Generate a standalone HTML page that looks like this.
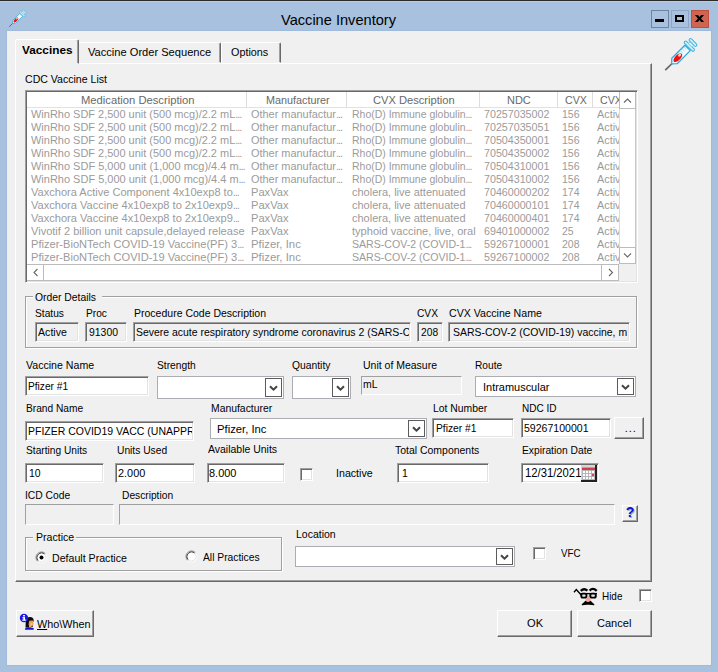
<!DOCTYPE html>
<html><head><meta charset="utf-8"><title>Vaccine Inventory</title>
<style>
html,body{margin:0;padding:0}
body{width:718px;height:672px;overflow:hidden;position:relative;background:#a7c1de;font-family:"Liberation Sans",Arial,sans-serif;font-size:11px;color:#000}
.a{position:absolute}
.t{position:absolute;white-space:nowrap;transform-origin:0 0;display:block}
.tb{position:absolute;box-sizing:border-box;background:#fff;border:1px solid;border-color:#a0a0a0 #fff #fff #a0a0a0;box-shadow:inset 1px 1px 0 #696969,inset -1px -1px 0 #e3e3e3}
.ro{position:absolute;box-sizing:border-box;background:#f0f0f0;border:1px solid;border-color:#a0a0a0 #fff #fff #a0a0a0;box-shadow:inset 1px 1px 0 #696969,inset -1px -1px 0 #e3e3e3}
.fl{position:absolute;box-sizing:border-box;background:#f0f0f0;border:1px solid;border-color:#a0a0a0 #fff #fff #a0a0a0}
.cb{position:absolute;box-sizing:border-box;background:#fff;border:1px solid #abadb3}
.cb i{position:absolute;right:1px;top:1px;bottom:1px;width:17px;background:#fff;border:1px solid #5c5c5c;box-sizing:border-box}
.cb i svg{position:absolute;left:3px;top:50%;margin-top:-3px}
.btn{position:absolute;box-sizing:border-box;background:#f0f0f0;border:1px solid;border-color:#fff #696969 #696969 #fff;box-shadow:inset -1px -1px 0 #a0a0a0,inset 1px 1px 0 #f0f0f0}
.chk{position:absolute;box-sizing:border-box;width:13px;height:13px;background:#fff;border:1px solid;border-color:#a0a0a0 #fff #fff #a0a0a0;box-shadow:inset 1px 1px 0 #696969,inset -1px -1px 0 #e3e3e3}
.grp{position:absolute;box-sizing:border-box;border:1px solid #a0a0a0;box-shadow:inset 1px 1px 0 #fff,1px 1px 0 #fff}
.clip{position:absolute;overflow:hidden}
</style></head><body>
<!-- window frame -->
<div class="a" style="left:0;top:0;width:718px;height:1px;background:#2b2b2b"></div>
<div class="a" style="left:0;top:1px;width:718px;height:1px;background:#b6cce7"></div>
<div class="a" style="left:7px;top:31px;width:704px;height:634px;background:#f0f0f0;box-shadow:0 0 0 1px #9fbadb"></div>

<span class="t" style="left:280.5px;top:11.80px;font-size:15px;line-height:15px;transform:scaleX(0.9735)">Vaccine Inventory</span>
<svg class="a" style="left:0;top:0" width="718" height="80" viewBox="0 0 718 80"><g transform="translate(9.200 26.800) rotate(-45) scale(0.540)">
<line x1="0" y1="0" x2="9.500" y2="0" stroke="#666" stroke-width="1.700"/>
<path d="M9 0 L13 -3.800 L31.500 -3.800 L31.500 3.800 L13 3.800 Z" fill="#ecf9fe" stroke="#2eaadc" stroke-width="1.300" stroke-linejoin="round"/>
<path d="M22 -3 V0 M24.500 -3 V0 M27 -3 V0 M29.500 -3 V0" stroke="#9adcf0" stroke-width="0.800"/>
<ellipse cx="17.700" cy="0" rx="5.600" ry="2.700" fill="#f01212"/>
<ellipse cx="20.800" cy="-0.600" rx="1.700" ry="1.300" fill="#ffd6cc"/>
<rect x="32.600" y="-6.600" width="2.800" height="13.200" rx="1.300" fill="#d2f0fa" stroke="#3db2e0" stroke-width="1"/>
<rect x="35.400" y="-2.600" width="2.600" height="5.200" fill="#e2f6fc" stroke="#7fd0ea" stroke-width="0.800"/>
<rect x="37.800" y="-4.900" width="2.800" height="9.800" rx="1.300" fill="#d2f0fa" stroke="#3db2e0" stroke-width="1"/>
</g><g transform="translate(665.300 70.200) rotate(-45) scale(1)">
<line x1="0" y1="0" x2="9.500" y2="0" stroke="#666" stroke-width="1.700"/>
<path d="M9 0 L13 -3.800 L31.500 -3.800 L31.500 3.800 L13 3.800 Z" fill="#ecf9fe" stroke="#2eaadc" stroke-width="1.300" stroke-linejoin="round"/>
<path d="M22 -3 V0 M24.500 -3 V0 M27 -3 V0 M29.500 -3 V0" stroke="#9adcf0" stroke-width="0.800"/>
<ellipse cx="17.700" cy="0" rx="5.600" ry="2.700" fill="#f01212"/>
<ellipse cx="20.800" cy="-0.600" rx="1.700" ry="1.300" fill="#ffd6cc"/>
<rect x="32.600" y="-6.600" width="2.800" height="13.200" rx="1.300" fill="#d2f0fa" stroke="#3db2e0" stroke-width="1"/>
<rect x="35.400" y="-2.600" width="2.600" height="5.200" fill="#e2f6fc" stroke="#7fd0ea" stroke-width="0.800"/>
<rect x="37.800" y="-4.900" width="2.800" height="9.800" rx="1.300" fill="#d2f0fa" stroke="#3db2e0" stroke-width="1"/>
</g></svg>
<div class="a" style="left:651px;top:10px;width:18px;height:18px;box-sizing:border-box;border:1px solid #6f84a3;background:#a7c1de"><div style="position:absolute;left:3px;top:8px;width:9px;height:3px;background:#000"></div></div>
<div class="a" style="left:671px;top:10px;width:18px;height:18px;box-sizing:border-box;border:1px solid #8fa5c6;background:#a7c1de"><div style="position:absolute;left:3px;top:4px;width:9px;height:7px;box-sizing:border-box;border:2px solid #000"></div></div>
<div class="a" style="left:691px;top:10px;width:18px;height:18px;background:#cf6450;box-sizing:border-box;border:1px solid #bd4f3c"><svg width="18" height="18" viewBox="0 0 18 18" style="position:absolute;left:-1px;top:-1px"><polygon points="3.900,5 6.900,5 8.500,7 10.100,5 13.100,5 10,8.500 13.100,12 10.100,12 8.500,10 6.900,12 3.900,12 7,8.500" fill="#000"/></svg></div>

<div class="a" style="left:15px;top:63px;width:637px;height:519px;box-sizing:border-box;border:1px solid;border-color:#fff #696969 #696969 #fff;box-shadow:inset -1px -1px 0 #a0a0a0"></div>
<div class="a" style="left:78px;top:42px;width:143px;height:21px;box-sizing:border-box;border:1px solid;border-color:#fff #696969 transparent #fff;box-shadow:inset -1px 0 0 #a0a0a0;border-radius:2px 2px 0 0"></div>
<div class="a" style="left:221px;top:42px;width:60px;height:21px;box-sizing:border-box;border:1px solid;border-color:#fff #696969 transparent #fff;box-shadow:inset -1px 0 0 #a0a0a0;border-radius:2px 2px 0 0"></div>
<div class="a" style="left:15px;top:39px;width:64px;height:25px;box-sizing:border-box;background:#f0f0f0;border:1px solid;border-color:#fff #696969 transparent #fff;box-shadow:inset -1px 0 0 #a0a0a0;border-radius:2px 2px 0 0"></div>

<span class="t" style="left:22.1px;top:45.27px;font-size:11.5px;line-height:11.5px;font-weight:bold;transform:scaleX(1.0257)">Vaccines</span>
<span class="t" style="left:87.5px;top:46.69px;font-size:11px;line-height:11px;transform:scaleX(1.0091)">Vaccine Order Sequence</span>
<span class="t" style="left:231.3px;top:46.69px;font-size:11px;line-height:11px;transform:scaleX(0.9810)">Options</span>
<span class="t" style="left:24.9px;top:73.69px;font-size:11px;line-height:11px;transform:scaleX(0.9603)">CDC Vaccine List</span>
<div class="a" style="left:25px;top:90px;width:613px;height:193px;box-sizing:border-box;background:#fff;border:1px solid;border-color:#a0a0a0 #fff #fff #a0a0a0;box-shadow:inset 1px 1px 0 #696969,inset -1px -1px 0 #e3e3e3"></div>
<div class="a" style="left:246px;top:92px;width:1px;height:15px;background:#dcdcdc"></div>
<div class="a" style="left:346px;top:92px;width:1px;height:15px;background:#dcdcdc"></div>
<div class="a" style="left:479px;top:92px;width:1px;height:15px;background:#dcdcdc"></div>
<div class="a" style="left:557px;top:92px;width:1px;height:15px;background:#dcdcdc"></div>
<div class="a" style="left:592px;top:92px;width:1px;height:15px;background:#dcdcdc"></div>
<div class="a" style="left:27px;top:107px;width:592px;height:1px;background:#e2e2e2"></div>
<span class="t" style="left:80.5px;top:93.68px;font-size:11.6px;line-height:11.6px;color:#686868;transform:scaleX(0.9678)">Medication Description</span>
<span class="t" style="left:266px;top:93.68px;font-size:11.6px;line-height:11.6px;color:#686868;transform:scaleX(0.9310)">Manufacturer</span>
<span class="t" style="left:373px;top:93.68px;font-size:11.6px;line-height:11.6px;color:#686868;transform:scaleX(0.9605)">CVX Description</span>
<span class="t" style="left:507.2px;top:93.68px;font-size:11.6px;line-height:11.6px;color:#686868;transform:scaleX(0.9473)">NDC</span>
<span class="t" style="left:564.6px;top:93.68px;font-size:11.6px;line-height:11.6px;color:#686868;transform:scaleX(0.9185)">CVX</span>
<div class="clip" style="left:593px;top:92px;width:26px;height:15px"><span class="t" style="left:6.7px;top:1.68px;font-size:11.6px;line-height:11.6px;color:#686868;transform:scaleX(0.9185)">CVX</span></div>
<span class="t" style="left:31px;top:107.68px;font-size:11.6px;line-height:11.6px;color:#9b9b9b;transform:scaleX(0.9462)">WinRho SDF 2,500 unit (500 mcg)/2.2 mL<span style="letter-spacing:-1.1px">...</span></span>
<span class="t" style="left:251px;top:107.68px;font-size:11.6px;line-height:11.6px;color:#9b9b9b;transform:scaleX(0.9421)">Other manufactur<span style="letter-spacing:-1.1px">...</span></span>
<span class="t" style="left:352px;top:107.68px;font-size:11.6px;line-height:11.6px;color:#9b9b9b;transform:scaleX(0.9036)">Rho(D) Immune globulin<span style="letter-spacing:-1.1px">...</span></span>
<span class="t" style="left:484.4px;top:107.68px;font-size:11.6px;line-height:11.6px;color:#9b9b9b;transform:scaleX(0.9219)">70257035002</span>
<span class="t" style="left:561.5px;top:107.68px;font-size:11.6px;line-height:11.6px;color:#9b9b9b;transform:scaleX(0.9047)">156</span>
<div class="clip" style="left:593px;top:106.5px;width:26px;height:14px"><span class="t" style="left:3.6px;top:1.18px;font-size:11.6px;line-height:11.6px;color:#9b9b9b;transform:scaleX(0.9342)">Active</span></div>
<span class="t" style="left:31px;top:120.68px;font-size:11.6px;line-height:11.6px;color:#9b9b9b;transform:scaleX(0.9462)">WinRho SDF 2,500 unit (500 mcg)/2.2 mL<span style="letter-spacing:-1.1px">...</span></span>
<span class="t" style="left:251px;top:120.68px;font-size:11.6px;line-height:11.6px;color:#9b9b9b;transform:scaleX(0.9421)">Other manufactur<span style="letter-spacing:-1.1px">...</span></span>
<span class="t" style="left:352px;top:120.68px;font-size:11.6px;line-height:11.6px;color:#9b9b9b;transform:scaleX(0.9036)">Rho(D) Immune globulin<span style="letter-spacing:-1.1px">...</span></span>
<span class="t" style="left:484.4px;top:120.68px;font-size:11.6px;line-height:11.6px;color:#9b9b9b;transform:scaleX(0.9219)">70257035051</span>
<span class="t" style="left:561.5px;top:120.68px;font-size:11.6px;line-height:11.6px;color:#9b9b9b;transform:scaleX(0.9047)">156</span>
<div class="clip" style="left:593px;top:119.5px;width:26px;height:14px"><span class="t" style="left:3.6px;top:1.18px;font-size:11.6px;line-height:11.6px;color:#9b9b9b;transform:scaleX(0.9342)">Active</span></div>
<span class="t" style="left:31px;top:133.68px;font-size:11.6px;line-height:11.6px;color:#9b9b9b;transform:scaleX(0.9462)">WinRho SDF 2,500 unit (500 mcg)/2.2 mL<span style="letter-spacing:-1.1px">...</span></span>
<span class="t" style="left:251px;top:133.68px;font-size:11.6px;line-height:11.6px;color:#9b9b9b;transform:scaleX(0.9421)">Other manufactur<span style="letter-spacing:-1.1px">...</span></span>
<span class="t" style="left:352px;top:133.68px;font-size:11.6px;line-height:11.6px;color:#9b9b9b;transform:scaleX(0.9036)">Rho(D) Immune globulin<span style="letter-spacing:-1.1px">...</span></span>
<span class="t" style="left:484.4px;top:133.68px;font-size:11.6px;line-height:11.6px;color:#9b9b9b;transform:scaleX(0.9219)">70504350001</span>
<span class="t" style="left:561.5px;top:133.68px;font-size:11.6px;line-height:11.6px;color:#9b9b9b;transform:scaleX(0.9047)">156</span>
<div class="clip" style="left:593px;top:132.5px;width:26px;height:14px"><span class="t" style="left:3.6px;top:1.18px;font-size:11.6px;line-height:11.6px;color:#9b9b9b;transform:scaleX(0.9342)">Active</span></div>
<span class="t" style="left:31px;top:146.68px;font-size:11.6px;line-height:11.6px;color:#9b9b9b;transform:scaleX(0.9462)">WinRho SDF 2,500 unit (500 mcg)/2.2 mL<span style="letter-spacing:-1.1px">...</span></span>
<span class="t" style="left:251px;top:146.68px;font-size:11.6px;line-height:11.6px;color:#9b9b9b;transform:scaleX(0.9421)">Other manufactur<span style="letter-spacing:-1.1px">...</span></span>
<span class="t" style="left:352px;top:146.68px;font-size:11.6px;line-height:11.6px;color:#9b9b9b;transform:scaleX(0.9036)">Rho(D) Immune globulin<span style="letter-spacing:-1.1px">...</span></span>
<span class="t" style="left:484.4px;top:146.68px;font-size:11.6px;line-height:11.6px;color:#9b9b9b;transform:scaleX(0.9219)">70504350002</span>
<span class="t" style="left:561.5px;top:146.68px;font-size:11.6px;line-height:11.6px;color:#9b9b9b;transform:scaleX(0.9047)">156</span>
<div class="clip" style="left:593px;top:145.5px;width:26px;height:14px"><span class="t" style="left:3.6px;top:1.18px;font-size:11.6px;line-height:11.6px;color:#9b9b9b;transform:scaleX(0.9342)">Active</span></div>
<span class="t" style="left:31px;top:159.68px;font-size:11.6px;line-height:11.6px;color:#9b9b9b;transform:scaleX(0.9474)">WinRho SDF 5,000 unit (1,000 mcg)/4.4 m<span style="letter-spacing:-1.1px">...</span></span>
<span class="t" style="left:251px;top:159.68px;font-size:11.6px;line-height:11.6px;color:#9b9b9b;transform:scaleX(0.9421)">Other manufactur<span style="letter-spacing:-1.1px">...</span></span>
<span class="t" style="left:352px;top:159.68px;font-size:11.6px;line-height:11.6px;color:#9b9b9b;transform:scaleX(0.9036)">Rho(D) Immune globulin<span style="letter-spacing:-1.1px">...</span></span>
<span class="t" style="left:484.4px;top:159.68px;font-size:11.6px;line-height:11.6px;color:#9b9b9b;transform:scaleX(0.9219)">70504310001</span>
<span class="t" style="left:561.5px;top:159.68px;font-size:11.6px;line-height:11.6px;color:#9b9b9b;transform:scaleX(0.9047)">156</span>
<div class="clip" style="left:593px;top:158.5px;width:26px;height:14px"><span class="t" style="left:3.6px;top:1.18px;font-size:11.6px;line-height:11.6px;color:#9b9b9b;transform:scaleX(0.9342)">Active</span></div>
<span class="t" style="left:31px;top:172.68px;font-size:11.6px;line-height:11.6px;color:#9b9b9b;transform:scaleX(0.9474)">WinRho SDF 5,000 unit (1,000 mcg)/4.4 m<span style="letter-spacing:-1.1px">...</span></span>
<span class="t" style="left:251px;top:172.68px;font-size:11.6px;line-height:11.6px;color:#9b9b9b;transform:scaleX(0.9421)">Other manufactur<span style="letter-spacing:-1.1px">...</span></span>
<span class="t" style="left:352px;top:172.68px;font-size:11.6px;line-height:11.6px;color:#9b9b9b;transform:scaleX(0.9036)">Rho(D) Immune globulin<span style="letter-spacing:-1.1px">...</span></span>
<span class="t" style="left:484.4px;top:172.68px;font-size:11.6px;line-height:11.6px;color:#9b9b9b;transform:scaleX(0.9219)">70504310002</span>
<span class="t" style="left:561.5px;top:172.68px;font-size:11.6px;line-height:11.6px;color:#9b9b9b;transform:scaleX(0.9047)">156</span>
<div class="clip" style="left:593px;top:171.5px;width:26px;height:14px"><span class="t" style="left:3.6px;top:1.18px;font-size:11.6px;line-height:11.6px;color:#9b9b9b;transform:scaleX(0.9342)">Active</span></div>
<span class="t" style="left:31px;top:185.68px;font-size:11.6px;line-height:11.6px;color:#9b9b9b;transform:scaleX(0.9528)">Vaxchora Active Component 4x10exp8 to<span style="letter-spacing:-1.1px">...</span></span>
<span class="t" style="left:251px;top:185.68px;font-size:11.6px;line-height:11.6px;color:#9b9b9b;transform:scaleX(0.9588)">PaxVax</span>
<span class="t" style="left:352px;top:185.68px;font-size:11.6px;line-height:11.6px;color:#9b9b9b;transform:scaleX(0.9475)">cholera, live attenuated</span>
<span class="t" style="left:484.4px;top:185.68px;font-size:11.6px;line-height:11.6px;color:#9b9b9b;transform:scaleX(0.9219)">70460000202</span>
<span class="t" style="left:561.5px;top:185.68px;font-size:11.6px;line-height:11.6px;color:#9b9b9b;transform:scaleX(0.9047)">174</span>
<div class="clip" style="left:593px;top:184.5px;width:26px;height:14px"><span class="t" style="left:3.6px;top:1.18px;font-size:11.6px;line-height:11.6px;color:#9b9b9b;transform:scaleX(0.9342)">Active</span></div>
<span class="t" style="left:31px;top:198.68px;font-size:11.6px;line-height:11.6px;color:#9b9b9b;transform:scaleX(0.9537)">Vaxchora Vaccine 4x10exp8 to 2x10exp9<span style="letter-spacing:-1.1px">...</span></span>
<span class="t" style="left:251px;top:198.68px;font-size:11.6px;line-height:11.6px;color:#9b9b9b;transform:scaleX(0.9588)">PaxVax</span>
<span class="t" style="left:352px;top:198.68px;font-size:11.6px;line-height:11.6px;color:#9b9b9b;transform:scaleX(0.9475)">cholera, live attenuated</span>
<span class="t" style="left:484.4px;top:198.68px;font-size:11.6px;line-height:11.6px;color:#9b9b9b;transform:scaleX(0.9219)">70460000101</span>
<span class="t" style="left:561.5px;top:198.68px;font-size:11.6px;line-height:11.6px;color:#9b9b9b;transform:scaleX(0.9047)">174</span>
<div class="clip" style="left:593px;top:197.5px;width:26px;height:14px"><span class="t" style="left:3.6px;top:1.18px;font-size:11.6px;line-height:11.6px;color:#9b9b9b;transform:scaleX(0.9342)">Active</span></div>
<span class="t" style="left:31px;top:211.68px;font-size:11.6px;line-height:11.6px;color:#9b9b9b;transform:scaleX(0.9537)">Vaxchora Vaccine 4x10exp8 to 2x10exp9<span style="letter-spacing:-1.1px">...</span></span>
<span class="t" style="left:251px;top:211.68px;font-size:11.6px;line-height:11.6px;color:#9b9b9b;transform:scaleX(0.9588)">PaxVax</span>
<span class="t" style="left:352px;top:211.68px;font-size:11.6px;line-height:11.6px;color:#9b9b9b;transform:scaleX(0.9475)">cholera, live attenuated</span>
<span class="t" style="left:484.4px;top:211.68px;font-size:11.6px;line-height:11.6px;color:#9b9b9b;transform:scaleX(0.9219)">70460000401</span>
<span class="t" style="left:561.5px;top:211.68px;font-size:11.6px;line-height:11.6px;color:#9b9b9b;transform:scaleX(0.9047)">174</span>
<div class="clip" style="left:593px;top:210.5px;width:26px;height:14px"><span class="t" style="left:3.6px;top:1.18px;font-size:11.6px;line-height:11.6px;color:#9b9b9b;transform:scaleX(0.9342)">Active</span></div>
<span class="t" style="left:31px;top:224.68px;font-size:11.6px;line-height:11.6px;color:#9b9b9b;transform:scaleX(0.9532)">Vivotif 2 billion unit capsule,delayed release</span>
<span class="t" style="left:251px;top:224.68px;font-size:11.6px;line-height:11.6px;color:#9b9b9b;transform:scaleX(0.9588)">PaxVax</span>
<span class="t" style="left:352px;top:224.68px;font-size:11.6px;line-height:11.6px;color:#9b9b9b;transform:scaleX(0.9542)">typhoid vaccine, live, oral</span>
<span class="t" style="left:484.4px;top:224.68px;font-size:11.6px;line-height:11.6px;color:#9b9b9b;transform:scaleX(0.9219)">69401000002</span>
<span class="t" style="left:561.5px;top:224.68px;font-size:11.6px;line-height:11.6px;color:#9b9b9b;transform:scaleX(0.8988)">25</span>
<div class="clip" style="left:593px;top:223.5px;width:26px;height:14px"><span class="t" style="left:3.6px;top:1.18px;font-size:11.6px;line-height:11.6px;color:#9b9b9b;transform:scaleX(0.9342)">Active</span></div>
<span class="t" style="left:31px;top:237.68px;font-size:11.6px;line-height:11.6px;color:#9b9b9b;transform:scaleX(0.9563)">Pfizer-BioNTech COVID-19 Vaccine(PF) 3<span style="letter-spacing:-1.1px">...</span></span>
<span class="t" style="left:251px;top:237.68px;font-size:11.6px;line-height:11.6px;color:#9b9b9b;transform:scaleX(0.9783)">Pfizer, Inc</span>
<span class="t" style="left:352px;top:237.68px;font-size:11.6px;line-height:11.6px;color:#9b9b9b;transform:scaleX(0.9126)">SARS-COV-2 (COVID-1<span style="letter-spacing:-1.1px">...</span></span>
<span class="t" style="left:484.4px;top:237.68px;font-size:11.6px;line-height:11.6px;color:#9b9b9b;transform:scaleX(0.9219)">59267100001</span>
<span class="t" style="left:561.5px;top:237.68px;font-size:11.6px;line-height:11.6px;color:#9b9b9b;transform:scaleX(0.9047)">208</span>
<div class="clip" style="left:593px;top:236.5px;width:26px;height:14px"><span class="t" style="left:3.6px;top:1.18px;font-size:11.6px;line-height:11.6px;color:#9b9b9b;transform:scaleX(0.9342)">Active</span></div>
<span class="t" style="left:31px;top:250.68px;font-size:11.6px;line-height:11.6px;color:#9b9b9b;transform:scaleX(0.9563)">Pfizer-BioNTech COVID-19 Vaccine(PF) 3<span style="letter-spacing:-1.1px">...</span></span>
<span class="t" style="left:251px;top:250.68px;font-size:11.6px;line-height:11.6px;color:#9b9b9b;transform:scaleX(0.9783)">Pfizer, Inc</span>
<span class="t" style="left:352px;top:250.68px;font-size:11.6px;line-height:11.6px;color:#9b9b9b;transform:scaleX(0.9126)">SARS-COV-2 (COVID-1<span style="letter-spacing:-1.1px">...</span></span>
<span class="t" style="left:484.4px;top:250.68px;font-size:11.6px;line-height:11.6px;color:#9b9b9b;transform:scaleX(0.9219)">59267100002</span>
<span class="t" style="left:561.5px;top:250.68px;font-size:11.6px;line-height:11.6px;color:#9b9b9b;transform:scaleX(0.9047)">208</span>
<div class="clip" style="left:593px;top:249.5px;width:26px;height:14px"><span class="t" style="left:3.6px;top:1.18px;font-size:11.6px;line-height:11.6px;color:#9b9b9b;transform:scaleX(0.9342)">Active</span></div>
<div class="a" style="left:619px;top:92px;width:17px;height:172px;background:#fff;border-left:1px solid #dcdcdc;border-right:1px solid #c8c8c8;box-sizing:border-box"></div>
<div class="a" style="left:619px;top:92px;width:17px;height:17px;background:#fff;border:1px solid #bcbcbc;border-top:none;box-sizing:border-box"></div>
<div class="a" style="left:619px;top:247px;width:17px;height:17px;background:#fff;border:1px solid #bcbcbc;box-sizing:border-box"></div>
<div class="a" style="left:27px;top:264px;width:609px;height:17px;background:#f0f0f0"></div>
<div class="a" style="left:27px;top:264px;width:592px;height:17px;background:#fff;border:1px solid #bcbcbc;border-left:none;box-sizing:border-box"></div>
<div class="a" style="left:43px;top:264px;width:1px;height:17px;background:#bcbcbc"></div>
<div class="a" style="left:601px;top:264px;width:1px;height:17px;background:#bcbcbc"></div>
<svg class="a" style="left:619px;top:92px" width="17" height="172" viewBox="0 0 17 172"><path d="M5 10.500 L8.500 7 L12 10.500" fill="none" stroke="#686868" stroke-width="1.100"/><path d="M5 161.500 L8.500 165 L12 161.500" fill="none" stroke="#686868" stroke-width="1.100"/></svg>
<svg class="a" style="left:27px;top:264px" width="592" height="17" viewBox="0 0 592 17"><path d="M10.500 5 L7 8.500 L10.500 12" fill="none" stroke="#686868" stroke-width="1.100"/><path d="M582 5 L585.500 8.500 L582 12" fill="none" stroke="#686868" stroke-width="1.100"/></svg>

<div class="grp" style="left:25px;top:296px;width:612px;height:52px"></div>
<div class="a" style="left:33px;top:290px;width:69px;height:13px;background:#f0f0f0"></div>
<span class="t" style="left:35.4px;top:291.69px;font-size:11px;line-height:11px;transform:scaleX(0.9414)">Order Details</span>
<span class="t" style="left:35.4px;top:307.69px;font-size:11px;line-height:11px;transform:scaleX(0.9267)">Status</span>
<span class="t" style="left:85.5px;top:307.69px;font-size:11px;line-height:11px;transform:scaleX(0.9238)">Proc</span>
<span class="t" style="left:133.6px;top:307.69px;font-size:11px;line-height:11px;transform:scaleX(0.9552)">Procedure Code Description</span>
<span class="t" style="left:417.4px;top:307.69px;font-size:11px;line-height:11px;transform:scaleX(0.9282)">CVX</span>
<span class="t" style="left:449.1px;top:307.69px;font-size:11px;line-height:11px;transform:scaleX(0.9638)">CVX Vaccine Name</span>
<div class="ro" style="left:35px;top:322px;width:44px;height:20px"></div>
<span class="t" style="left:38.4px;top:326.69px;font-size:11px;line-height:11px;transform:scaleX(0.9643)">Active</span>
<div class="ro" style="left:85px;top:322px;width:42px;height:20px"></div>
<span class="t" style="left:88.5px;top:326.69px;font-size:11px;line-height:11px;transform:scaleX(0.9479)">91300</span>
<div class="ro" style="left:133px;top:322px;width:278px;height:20px"></div>
<div class="clip" style="left:135px;top:324px;width:274px;height:15px"><span class="t" style="left:1.4px;top:2.69px;font-size:11px;line-height:11px;transform:scaleX(0.9502)">Severe acute respiratory syndrome coronavirus 2 (SARS-COV-2)</span></div>
<div class="ro" style="left:417px;top:322px;width:26px;height:20px"></div>
<span class="t" style="left:420.7px;top:326.69px;font-size:11px;line-height:11px;transform:scaleX(0.9314)">208</span>
<div class="ro" style="left:448px;top:322px;width:182px;height:20px"></div>
<div class="clip" style="left:450px;top:324px;width:176.500px;height:15px"><span class="t" style="left:2.5px;top:2.69px;font-size:11px;line-height:11px;transform:scaleX(0.9494)">SARS-COV-2 (COVID-19) vaccine, mRNA</span></div>
<span class="t" style="left:25.8px;top:359.69px;font-size:11px;line-height:11px;transform:scaleX(0.9630)">Vaccine Name</span>
<span class="t" style="left:157.4px;top:359.69px;font-size:11px;line-height:11px;transform:scaleX(0.9328)">Strength</span>
<span class="t" style="left:292.1px;top:359.69px;font-size:11px;line-height:11px;transform:scaleX(0.9373)">Quantity</span>
<span class="t" style="left:362.5px;top:359.69px;font-size:11px;line-height:11px;transform:scaleX(0.9529)">Unit of Measure</span>
<span class="t" style="left:475.4px;top:359.69px;font-size:11px;line-height:11px;transform:scaleX(0.9230)">Route</span>
<div class="tb" style="left:25px;top:376px;width:124px;height:20px"></div>
<span class="t" style="left:28.4px;top:380.69px;font-size:11px;line-height:11px;transform:scaleX(0.9235)">Pfizer #1</span>
<div class="cb" style="left:157px;top:376px;width:127px;height:23px"><i><svg width="9" height="7" viewBox="0 0 9 7"><path d="M1 1.200 L4.500 4.700 L8 1.200" fill="none" stroke="#444" stroke-width="2"/></svg></i></div>
<div class="cb" style="left:292px;top:376px;width:59px;height:23px"><i><svg width="9" height="7" viewBox="0 0 9 7"><path d="M1 1.200 L4.500 4.700 L8 1.200" fill="none" stroke="#444" stroke-width="2"/></svg></i></div>
<div class="fl" style="left:361px;top:376px;width:101px;height:19px"></div>
<span class="t" style="left:362.7px;top:378.69px;font-size:11px;line-height:11px;transform:scaleX(0.9489)">mL</span>
<div class="cb" style="left:475px;top:376px;width:161px;height:21px"><i><svg width="9" height="7" viewBox="0 0 9 7"><path d="M1 1.200 L4.500 4.700 L8 1.200" fill="none" stroke="#444" stroke-width="2"/></svg></i></div>
<span class="t" style="left:482.9px;top:381.69px;font-size:11px;line-height:11px;transform:scaleX(0.9964)">Intramuscular</span>
<span class="t" style="left:25.7px;top:403.19px;font-size:11px;line-height:11px;transform:scaleX(0.9261)">Brand Name</span>
<span class="t" style="left:210.7px;top:403.19px;font-size:11px;line-height:11px;transform:scaleX(0.9443)">Manufacturer</span>
<span class="t" style="left:432.7px;top:403.19px;font-size:11px;line-height:11px;transform:scaleX(0.9429)">Lot Number</span>
<span class="t" style="left:522px;top:403.19px;font-size:11px;line-height:11px;transform:scaleX(0.9079)">NDC ID</span>
<div class="tb" style="left:25px;top:421px;width:169px;height:20px"></div>
<div class="clip" style="left:27px;top:423px;width:165px;height:16px"><span class="t" style="left:1.4px;top:2.69px;font-size:11px;line-height:11px;transform:scaleX(0.9537)">PFIZER COVID19 VACC (UNAPPROVED)</span></div>
<div class="cb" style="left:210px;top:418px;width:217px;height:21px"><i><svg width="9" height="7" viewBox="0 0 9 7"><path d="M1 1.200 L4.500 4.700 L8 1.200" fill="none" stroke="#444" stroke-width="2"/></svg></i></div>
<span class="t" style="left:217.4px;top:423.69px;font-size:11px;line-height:11px;transform:scaleX(1.0249)">Pfizer, Inc</span>
<div class="tb" style="left:432px;top:418px;width:82px;height:20px"></div>
<span class="t" style="left:435.7px;top:422.69px;font-size:11px;line-height:11px;transform:scaleX(0.9327)">Pfizer #1</span>
<div class="tb" style="left:521px;top:418px;width:90px;height:20px"></div>
<span class="t" style="left:524.3px;top:422.69px;font-size:11px;line-height:11px;transform:scaleX(0.9584)">59267100001</span>
<div class="btn" style="left:614px;top:417px;width:30px;height:22px"></div>
<span class="t" style="left:624.7px;top:422.69px;font-size:11px;line-height:11px;letter-spacing:0.94px;transform:scaleX(1.0000)">...</span>
<span class="t" style="left:25.7px;top:445.19px;font-size:11px;line-height:11px;transform:scaleX(0.9268)">Starting Units</span>
<span class="t" style="left:117px;top:445.19px;font-size:11px;line-height:11px;transform:scaleX(0.9313)">Units Used</span>
<span class="t" style="left:208.4px;top:444.19px;font-size:11px;line-height:11px;transform:scaleX(0.9523)">Available Units</span>
<span class="t" style="left:395px;top:445.19px;font-size:11px;line-height:11px;transform:scaleX(0.9507)">Total Components</span>
<span class="t" style="left:522px;top:445.19px;font-size:11px;line-height:11px;transform:scaleX(0.9333)">Expiration Date</span>
<div class="tb" style="left:25px;top:463px;width:79px;height:20px"></div>
<span class="t" style="left:29.1px;top:467.69px;font-size:11px;line-height:11px;transform:scaleX(0.9469)">10</span>
<div class="tb" style="left:115px;top:463px;width:80px;height:20px"></div>
<span class="t" style="left:118px;top:467.69px;font-size:11px;line-height:11px;transform:scaleX(0.9916)">2.000</span>
<div class="tb" style="left:207px;top:463px;width:78px;height:20px"></div>
<span class="t" style="left:208.9px;top:467.69px;font-size:11px;line-height:11px;transform:scaleX(0.9952)">8.000</span>
<div class="chk" style="left:300px;top:468px"></div>
<span class="t" style="left:336.4px;top:468.19px;font-size:11px;line-height:11px;transform:scaleX(0.9678)">Inactive</span>
<div class="tb" style="left:397px;top:463px;width:92px;height:20px"></div>
<span class="t" style="left:401.7px;top:467.69px;font-size:11px;line-height:11px;transform:scaleX(0.9570)">1</span>
<div class="tb" style="left:521px;top:463px;width:78px;height:20px"></div>
<span class="t" style="left:524.6px;top:466.84px;font-size:12px;line-height:12px;transform:scaleX(0.9390)">12/31/2021</span>
<div class="a" style="left:581px;top:465px;width:16px;height:17px;background:#d8d6d0;box-sizing:border-box;border-right:2px solid #222;border-bottom:2px solid #222"></div>
<svg class="a" style="left:582px;top:467px" width="13" height="13" viewBox="0 0 13 13"><rect x="0" y="0" width="13" height="13" fill="#b4b4b4"/><rect x="0" y="0" width="13" height="3" fill="#d43a50"/><rect x="0" y="0" width="13" height="1" fill="#e88a98"/>
<g fill="#fff"><rect x="1" y="4" width="2" height="2"/><rect x="4" y="4" width="2" height="2"/><rect x="7" y="4" width="2" height="2"/><rect x="10" y="4" width="2" height="2"/>
<rect x="1" y="7" width="2" height="2"/><rect x="4" y="7" width="2" height="2"/><rect x="7" y="7" width="2" height="2"/><rect x="10" y="7" width="2" height="2" fill="#e0405a"/>
<rect x="1" y="10" width="2" height="2"/><rect x="4" y="10" width="2" height="2"/><rect x="7" y="10" width="2" height="2"/><rect x="10" y="10" width="2" height="2"/></g></svg>

<span class="t" style="left:25px;top:490.19px;font-size:11px;line-height:11px;transform:scaleX(0.9359)">ICD Code</span>
<span class="t" style="left:122px;top:490.19px;font-size:11px;line-height:11px;transform:scaleX(0.9286)">Description</span>
<div class="fl" style="left:25px;top:504px;width:89px;height:21px"></div>
<div class="fl" style="left:119px;top:504px;width:496px;height:21px"></div>
<div class="btn" style="left:622px;top:505px;width:16px;height:17px"></div>
<div class="a" style="left:625px;top:503px;width:10px;font:bold 14px/18px 'Liberation Sans',sans-serif;color:#1010d8;text-align:center;text-shadow:1px 1px 0 #9aa">?</div>
<div class="grp" style="left:25px;top:537px;width:257px;height:34px"></div>
<div class="a" style="left:33px;top:531px;width:43px;height:13px;background:#f0f0f0"></div>
<span class="t" style="left:35.6px;top:532.19px;font-size:11px;line-height:11px;transform:scaleX(0.9610)">Practice</span>
<svg class="a" style="left:34.5px;top:550.5px" width="13" height="13" viewBox="0 0 13 13"><circle cx="6.500" cy="6.500" r="5" fill="#fff"/>
<path d="M2.610 10.390 A5.500 5.500 0 0 1 10.390 2.610" fill="none" stroke="#808080" stroke-width="1"/>
<path d="M3.320 9.680 A4.500 4.500 0 0 1 9.680 3.320" fill="none" stroke="#404040" stroke-width="1"/>
<path d="M10.390 2.610 A5.500 5.500 0 0 1 2.610 10.390" fill="none" stroke="#fff" stroke-width="1"/>
<path d="M9.680 3.320 A4.500 4.500 0 0 1 3.320 9.680" fill="none" stroke="#e3e3e3" stroke-width="1"/><circle cx="6.500" cy="6.500" r="2" fill="#000"/></svg>
<span class="t" style="left:52.4px;top:552.69px;font-size:11px;line-height:11px;transform:scaleX(0.9645)">Default Practice</span>
<svg class="a" style="left:185.1px;top:549.5px" width="13" height="13" viewBox="0 0 13 13"><circle cx="6.500" cy="6.500" r="5" fill="#fff"/>
<path d="M2.610 10.390 A5.500 5.500 0 0 1 10.390 2.610" fill="none" stroke="#808080" stroke-width="1"/>
<path d="M3.320 9.680 A4.500 4.500 0 0 1 9.680 3.320" fill="none" stroke="#404040" stroke-width="1"/>
<path d="M10.390 2.610 A5.500 5.500 0 0 1 2.610 10.390" fill="none" stroke="#fff" stroke-width="1"/>
<path d="M9.680 3.320 A4.500 4.500 0 0 1 3.320 9.680" fill="none" stroke="#e3e3e3" stroke-width="1"/></svg>
<span class="t" style="left:203.3px;top:551.69px;font-size:11px;line-height:11px;transform:scaleX(0.9351)">All Practices</span>
<span class="t" style="left:295.9px;top:529.19px;font-size:11px;line-height:11px;transform:scaleX(0.9545)">Location</span>
<div class="cb" style="left:295px;top:546px;width:220px;height:21px"><i><svg width="9" height="7" viewBox="0 0 9 7"><path d="M1 1.200 L4.500 4.700 L8 1.200" fill="none" stroke="#444" stroke-width="2"/></svg></i></div>
<div class="chk" style="left:533px;top:547px"></div>
<span class="t" style="left:560.5px;top:547.69px;font-size:11px;line-height:11px;transform:scaleX(0.8864)">VFC</span>
<svg class="a" style="left:568px;top:582px" width="36" height="27" viewBox="0 0 36 27">
<path d="M6 10.200 L8.300 7.600 L13.200 13" fill="none" stroke="#000" stroke-width="1.400"/>
<path d="M12.800 8.900 Q16 5.600 19.400 8.600" fill="none" stroke="#000" stroke-width="2.300"/>
<path d="M21.600 8.600 Q25 5.200 28.700 8.900" fill="none" stroke="#000" stroke-width="2.300"/>
<path d="M12.500 11.600 H29" stroke="#000" stroke-width="1.300"/>
<rect x="13.300" y="11.600" width="5.200" height="4" rx="1.600" fill="#e6e6e6" stroke="#000" stroke-width="1.900"/>
<rect x="22.300" y="11.600" width="5.500" height="4" rx="1.600" fill="#e6e6e6" stroke="#000" stroke-width="1.900"/>
<path d="M20.200 13.200 L16.600 19.800 L23.600 19.800 Z" fill="#f2a896"/>
<path d="M14.300 22.700 L17.400 19.600 L20 20.700 L22.600 19.600 L25.800 22.700 L20 21.900 Z" fill="#000" stroke="#000" stroke-width="1.200" stroke-linejoin="round"/>
</svg>
<span class="t" style="left:602.3px;top:590.69px;font-size:11px;line-height:11px;transform:scaleX(0.9017)">Hide</span>
<div class="chk" style="left:639px;top:589px"></div>
<div class="btn" style="left:16px;top:610px;width:78px;height:27px"></div>
<svg class="a" style="left:14px;top:606px" width="36" height="27" viewBox="0 0 36 27">
<path d="M11.500 21.500 L11.800 14 Q12.500 10.800 16 10.900 Q19.700 11 19.700 14.600 L19.200 16 L15.500 16 L15 21.500 Z" fill="#0c0c0c"/>
<path d="M15.200 14.800 L18.800 14.600 L19.500 17.600 L18.600 21 L15.600 21.700 L14.600 18.500 Z" fill="#e8a450"/>
<path d="M16.500 17 L18.500 17 L18.300 19.500 L16.500 20 Z" fill="#f2b8a8"/>
<path d="M17 20.200 L18.800 19.600 L18.600 21 Z" fill="#111"/>
<path d="M10.800 23.700 L11.600 21.800 L15 21.200 L19.600 22.100 L19.700 23.700 Z" fill="#1212d8"/>
<circle cx="10" cy="12" r="4.200" fill="#1818f0"/>
<g fill="#fff"><rect x="9.100" y="9" width="1.800" height="1.500"/><rect x="8.300" y="11.200" width="2.700" height="1"/><rect x="9.300" y="11.200" width="1.700" height="3.200"/><rect x="8.100" y="13.600" width="4" height="1.100"/></g>
</svg>
<span class="t" style="left:36.8px;top:619.19px;font-size:11px;line-height:11px;transform:scaleX(0.9831)"><u>W</u>ho\When</span>
<div class="btn" style="left:497px;top:610px;width:75px;height:27px"></div>
<span class="t" style="left:527.1px;top:617.69px;font-size:11px;line-height:11px;transform:scaleX(1.0122)">OK</span>
<div class="btn" style="left:577px;top:610px;width:75px;height:27px"></div>
<span class="t" style="left:597.3px;top:617.69px;font-size:11px;line-height:11px;transform:scaleX(1.0044)">Cancel</span>
</body></html>
